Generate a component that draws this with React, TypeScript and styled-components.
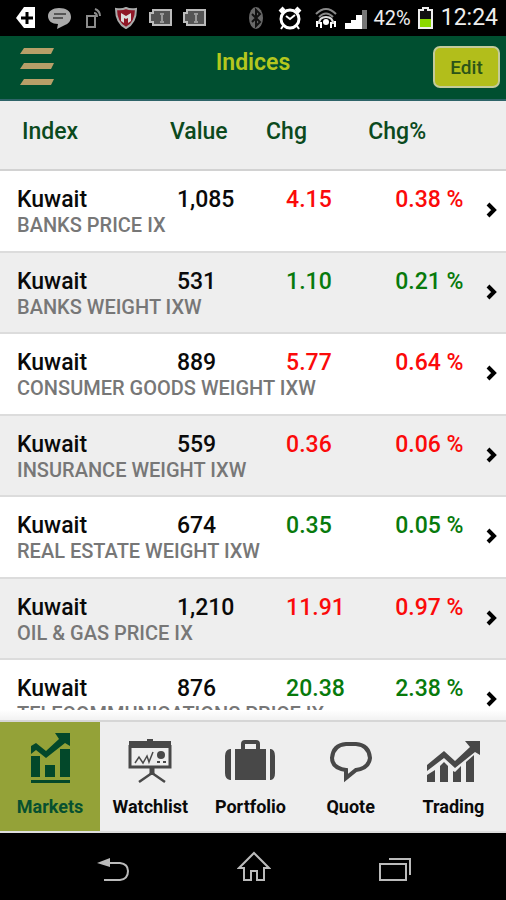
import React, { useState } from "react";
import styled, { createGlobalStyle } from "styled-components";

const GlobalStyle = createGlobalStyle`
  *, *::before, *::after { box-sizing: border-box; }
  body { margin: 0; background: #000; font-family: Roboto, "Liberation Sans", sans-serif; }
  button { font-family: inherit; }
  svg { display: block; flex: none; }
`;

const Screen = styled.div`
  display: flex;
  flex-direction: column;
  height: 100vh;
  background: #eee;
`;

const StatusBar = styled.div`
  display: flex;
  justify-content: space-between;
  align-items: center;
  flex: none;
  height: 36px;
  padding: 0 8px 0 16px;
  background: #000;
  color: #eee;
`;

const StatusGroup = styled.div<{ $gap: number }>`
  display: flex;
  align-items: center;
  gap: ${(p) => p.$gap}px;
`;

const StatusText = styled.span<{ $size: number }>`
  font-size: ${(p) => p.$size}px;
  line-height: 36px;
`;

const Header = styled.header`
  display: grid;
  grid-template-columns: 1fr auto 1fr;
  flex: none;
  height: 65px;
  padding: 10px 6px 0 16px;
  background: #004f30;
  border-bottom: 2px solid #2e6468;
`;

const MenuButton = styled.button`
  justify-self: start;
  align-self: start;
  padding: 0 4px;
  border: 0;
  background: none;
`;

const Title = styled.h1`
  margin: 0 10px 0 0;
  color: #b4c71e;
  font-size: 23px;
  font-weight: 600;
  line-height: 34px;
`;

const EditButton = styled.button`
  justify-self: end;
  align-self: start;
  width: 67px;
  height: 42px;
  padding: 0;
  border: 2px solid #c3cb9a;
  border-radius: 7px;
  background: #b2be1b;
  color: #2b5418;
  font-size: 19px;
  font-weight: 500;
`;

const ListArea = styled.main`
  flex: 1;
  min-height: 0;
  overflow-y: auto;
  scrollbar-width: none;
`;

const ListFade = styled.div`
  flex: none;
  height: 10px;
  background: linear-gradient(#fff, #f2f2f2);
`;

const IndexTable = styled.table`
  width: 100%;
  table-layout: fixed;
  border-collapse: separate;
  border-spacing: 0;
  text-align: left;
`;

const Column = styled.col<{ $width: number }>`
  width: ${(p) => p.$width}%;
`;

const HeadCell = styled.th<{ $indent: number }>`
  height: 70px;
  padding: 17px 0 0 ${(p) => p.$indent}px;
  border-bottom: 2px solid #d2d2d2;
  background: #eee;
  color: #0b4a1d;
  font-size: 23px;
  font-weight: 500;
  line-height: 28px;
  vertical-align: top;
`;

const Row = styled.tr`
  height: 82px;
  background: #fff;
  &:nth-child(even) {
    height: 81px;
    background: #eee;
  }
`;

const Cell = styled.td<{ $indent: number; $tone?: "up" | "down" }>`
  padding: 16px 0 0 ${(p) => p.$indent}px;
  border-bottom: 2px solid #dcdcdc;
  color: ${(p) => (p.$tone === "up" ? "#087a0c" : p.$tone === "down" ? "#fb0a0a" : "#0a0a0a")};
  font-size: 23px;
  font-weight: 500;
  line-height: 26px;
  vertical-align: top;
  white-space: nowrap;
`;

const Subtitle = styled.div`
  color: #777;
  font-size: 20px;
  line-height: 24px;
`;

const OpenButton = styled.button`
  display: block;
  margin: 15px 8px 0 auto;
  padding: 0;
  border: 0;
  background: none;
`;

const TabBar = styled.nav`
  display: grid;
  grid-template-columns: repeat(4, 20fr) 21fr;
  flex: none;
  height: 113px;
  border-top: 2px solid #d6d6d6;
  border-bottom: 2px solid #ddd;
  background: #eee;
`;

const Tab = styled.button<{ $active: boolean }>`
  display: flex;
  flex-direction: column;
  align-items: center;
  padding: 9px 0 0;
  border: 0;
  background: ${(p) => (p.$active ? "#94a238" : "transparent")};
  color: ${(p) => (p.$active ? "#075030" : "#0a0a0a")};
  font-size: 18px;
  font-weight: 700;
  line-height: 24px;
`;

const TabIcon = styled.svg<{ $active: boolean }>`
  color: ${(p) => (p.$active ? "#03482a" : "#484848")};
  margin-bottom: 10px;
`;

const SystemNav = styled.nav`
  display: grid;
  grid-template-columns: 1fr auto 1fr;
  align-items: center;
  flex: none;
  height: 67px;
  padding: 6px 94px 0 96px;
  background: #000;
`;

const SystemButton = styled.button<{ $align: "start" | "center" | "end" }>`
  justify-self: ${(p) => p.$align};
  padding: 0;
  border: 0;
  background: none;
`;

const StatusBattery = () => (
  <svg width="24" height="22" viewBox="0 0 24 22">
    <path d="M5 3H23V18H5V15H2V6H5Z" fill="#555" stroke="#bbb" strokeWidth="2" />
    <path d="M12 7h4M14 7v8M12 15h4" stroke="#999" strokeWidth="2" />
  </svg>
);

type Item = { name: string; detail: string; value: string; chg: string; pct: string; up: boolean };

const items: Item[] = [
  { name: "Kuwait", detail: "BANKS PRICE IX", value: "1,085", chg: "4.15", pct: "0.38 %", up: false },
  { name: "Kuwait", detail: "BANKS WEIGHT IXW", value: "531", chg: "1.10", pct: "0.21 %", up: true },
  { name: "Kuwait", detail: "CONSUMER GOODS WEIGHT IXW", value: "889", chg: "5.77", pct: "0.64 %", up: false },
  { name: "Kuwait", detail: "INSURANCE WEIGHT IXW", value: "559", chg: "0.36", pct: "0.06 %", up: false },
  { name: "Kuwait", detail: "REAL ESTATE WEIGHT IXW", value: "674", chg: "0.35", pct: "0.05 %", up: true },
  { name: "Kuwait", detail: "OIL & GAS PRICE IX", value: "1,210", chg: "11.91", pct: "0.97 %", up: false },
  { name: "Kuwait", detail: "TELECOMMUNICATIONS PRICE IX", value: "876", chg: "20.38", pct: "2.38 %", up: true },
];

const tabs = [
  {
    label: "Markets",
    icon: (
      <g fill="currentColor">
        <path d="M10 25h9v21h-9zM24 34h10v12H24zM39 18h10v28H39zM10 49h39v3H10z" />
        <path d="M10 15L15 12L25 20L38 8L34 2H49V15L44 12L25 27L15 19L10 23Z" />
      </g>
    ),
  },
  {
    label: "Watchlist",
    icon: (
      <g fill="none" stroke="currentColor">
        <path d="M26 8h6v3h-6zM8 10h42v7H8z" fill="currentColor" stroke="none" />
        <path d="M9 14V36H49V14" strokeWidth="3" />
        <path d="M14 32L18 26L22 32L26 25L28 31L32 21" strokeWidth="1.5" />
        <circle cx="40" cy="24" r="4" fill="currentColor" stroke="none" />
        <path d="M36 31h3M42 31h3" strokeWidth="2" />
        <path d="M31 37V44" strokeWidth="5" />
        <path d="M31 42L18 51M31 42L44 51" strokeWidth="2.5" />
      </g>
    ),
  },
  {
    label: "Portfolio",
    icon: (
      <g fill="currentColor">
        <path d="M14 18h31v31H14zM10 18v31H9Q4 48 4 42V25Q4 19 9 18ZM49 18v31h1Q54 48 54 42V25Q54 19 50 18Z" />
        <path d="M22 18V13Q22 11 24 11H35Q37 11 37 13V18" fill="none" stroke="currentColor" strokeWidth="4" />
      </g>
    ),
  },
  {
    label: "Quote",
    icon: (
      <path
        d="M24 13H34Q47 14 48 27Q47 37 34 39L24 47V39Q10 37 10 27Q11 14 24 13Z"
        fill="none"
        stroke="currentColor"
        strokeWidth="4"
      />
    ),
  },
  {
    label: "Trading",
    icon: (
      <g fill="currentColor">
        <path d="M3 44L11 39V51H3ZM16 35L20 31L24 35V51H16ZM29 40L31 41L37 35V51H29ZM42 31L50 24V51H42Z" />
        <path d="M3 34L20 20L31 30L46 16L41 10H56V24L51 21L31 37L20 27L3 40Z" />
      </g>
    ),
  },
];

export default function App() {
  const [active, setActive] = useState("Markets");
  return (
    <Screen>
      <GlobalStyle />
      <StatusBar>
        <StatusGroup $gap={10}>
          <svg width="22" height="24" viewBox="0 0 22 24">
            <path d="M8 1H19V22H8L0 12Z" fill="#fff" />
            <path d="M11 6V18M5 12H17" stroke="#000" strokeWidth="3" />
          </svg>
          <svg width="24" height="24" viewBox="0 0 24 24">
            <path d="M11 2C18 2 23 5 23 11C23 15 20 18 17 19L9 23L10 18C4 18 0 15 0 10C0 5 5 2 11 2Z" fill="#aaa" />
            <path d="M6 8H18M5 12H15" stroke="#555" strokeWidth="2" />
          </svg>
          <svg width="22" height="24" viewBox="0 0 22 24" fill="none" stroke="#8c8c8c">
            <path d="M5 10H13V21H5Z" strokeWidth="2" />
            <path d="M12 7Q15 7 15 11M13 3Q18 5 18 10" strokeWidth="2" />
          </svg>
          <svg width="24" height="24" viewBox="0 0 24 24">
            <path d="M2 3Q8 4 12 2Q16 4 22 3Q22 17 12 22Q2 17 2 3Z" fill="#8f1626" stroke="#aaa" strokeWidth="2" />
            <path d="M7 7L12 10L17 7V15L14 17V12L12 13L10 12V17L7 15Z" fill="#ddd" />
          </svg>
          <StatusBattery />
          <StatusBattery />
        </StatusGroup>
        <StatusGroup $gap={6}>
          <svg width="24" height="24" viewBox="0 0 24 24">
            <ellipse cx="8" cy="12" rx="7" ry="11" fill="#686868" />
            <path d="M4 8L12 16L8 20V4L12 8L4 16" fill="none" stroke="#111" strokeWidth="2" />
          </svg>
          <svg width="30" height="24" viewBox="0 0 30 24" fill="none" stroke="#fff">
            <circle cx="12" cy="13" r="9" strokeWidth="3" />
            <path d="M8 10L12 13L17 9M5 20L3 23M19 20L21 23" strokeWidth="2" />
            <path d="M2 6L6 2M18 2L22 6" strokeWidth="4" />
          </svg>
          <svg width="24" height="24" viewBox="0 0 24 24" fill="none">
            <path d="M2 8Q12 -2 22 8M5 11Q12 4 19 11" stroke="#888" strokeWidth="2" />
            <path d="M5 18Q5 11 12 11Q19 11 19 18" stroke="#ddd" strokeWidth="2" />
            <path d="M3 15V21M21 15V21M7 16V22M17 16V22" stroke="#fff" strokeWidth="2" />
            <circle cx="12" cy="16" r="3" fill="#fff" />
          </svg>
          <svg width="24" height="24" viewBox="0 0 24 24" fill="#fff">
            <path d="M1 17h6v6H1zM7 14h6v9H7zM12 9h6v14h-6z" />
            <path d="M18 4h5v19h-5z" fill="#777" />
          </svg>
          <StatusText $size={20}>42%</StatusText>
          <svg width="18" height="24" viewBox="0 0 18 24">
            <path d="M2 4H6V2H11V4H15V22H2Z" fill="#111" stroke="#eee" strokeWidth="2" />
            <path d="M3 13h11v8H3z" fill="#8bd800" />
          </svg>
          <StatusText $size={23}>12:24</StatusText>
        </StatusGroup>
      </StatusBar>
      <Header>
        <MenuButton aria-label="Menu">
          <svg width="34" height="41" viewBox="0 0 34 41" fill="#b79f68">
            <path d="M4 2H34L31 8H0ZM4 17H34L31 23H0ZM4 33H34L31 39H0Z" />
          </svg>
        </MenuButton>
        <Title>Indices</Title>
        <EditButton>Edit</EditButton>
      </Header>
      <ListArea>
        <IndexTable>
          <colgroup>
            <Column $width={32} />
            <Column $width={20} />
            <Column $width={20} />
            <Column $width={20} />
            <Column $width={8} />
          </colgroup>
          <thead>
            <tr>
              <HeadCell $indent={22}>Index</HeadCell>
              <HeadCell $indent={8}>Value</HeadCell>
              <HeadCell $indent={3}>Chg</HeadCell>
              <HeadCell $indent={4}>Chg%</HeadCell>
              <HeadCell $indent={0} />
            </tr>
          </thead>
          <tbody>
            {items.map((item) => (
              <Row key={item.detail}>
                <Cell $indent={17}>
                  {item.name}
                  <Subtitle>{item.detail}</Subtitle>
                </Cell>
                <Cell $indent={15}>{item.value}</Cell>
                <Cell $indent={23} $tone={item.up ? "up" : "down"}>{item.chg}</Cell>
                <Cell $indent={31} $tone={item.up ? "up" : "down"}>{item.pct}</Cell>
                <Cell $indent={0}>
                  <OpenButton aria-label={`Open ${item.detail}`}>
                    <svg width="12" height="16" viewBox="0 0 12 16" fill="none" stroke="#000" strokeWidth="4">
                      <path d="M2 2L8 8L2 14" />
                    </svg>
                  </OpenButton>
                </Cell>
              </Row>
            ))}
          </tbody>
        </IndexTable>
      </ListArea>
      <ListFade />
      <TabBar>
        {tabs.map(({ label, icon }) => (
          <Tab key={label} $active={label === active} onClick={() => setActive(label)}>
            <TabIcon $active={label === active} width="58" height="54" viewBox="0 0 58 54">
              {icon}
            </TabIcon>
            {label}
          </Tab>
        ))}
      </TabBar>
      <SystemNav>
        <SystemButton $align="start" aria-label="Back">
          <svg width="34" height="26" viewBox="0 0 34 26">
            <path d="M14 6H24Q32 7 32 14Q32 22 24 23H8" fill="none" stroke="#bbb" strokeWidth="2" />
            <path d="M1 6L14 1V10Z" fill="#bbb" />
          </svg>
        </SystemButton>
        <SystemButton $align="center" aria-label="Home">
          <svg width="34" height="38" viewBox="0 0 34 38" fill="none" stroke="#bbb" strokeWidth="2">
            <path d="M17 2L32 17H27V29H20V20H14V29H7V17H2Z" />
          </svg>
        </SystemButton>
        <SystemButton $align="end" aria-label="Recent apps">
          <svg width="34" height="26" viewBox="0 0 34 26" fill="none" stroke="#bbb" strokeWidth="2">
            <path d="M2 7H28V23H2ZM11 2H32V18" />
          </svg>
        </SystemButton>
      </SystemNav>
    </Screen>
  );
}
